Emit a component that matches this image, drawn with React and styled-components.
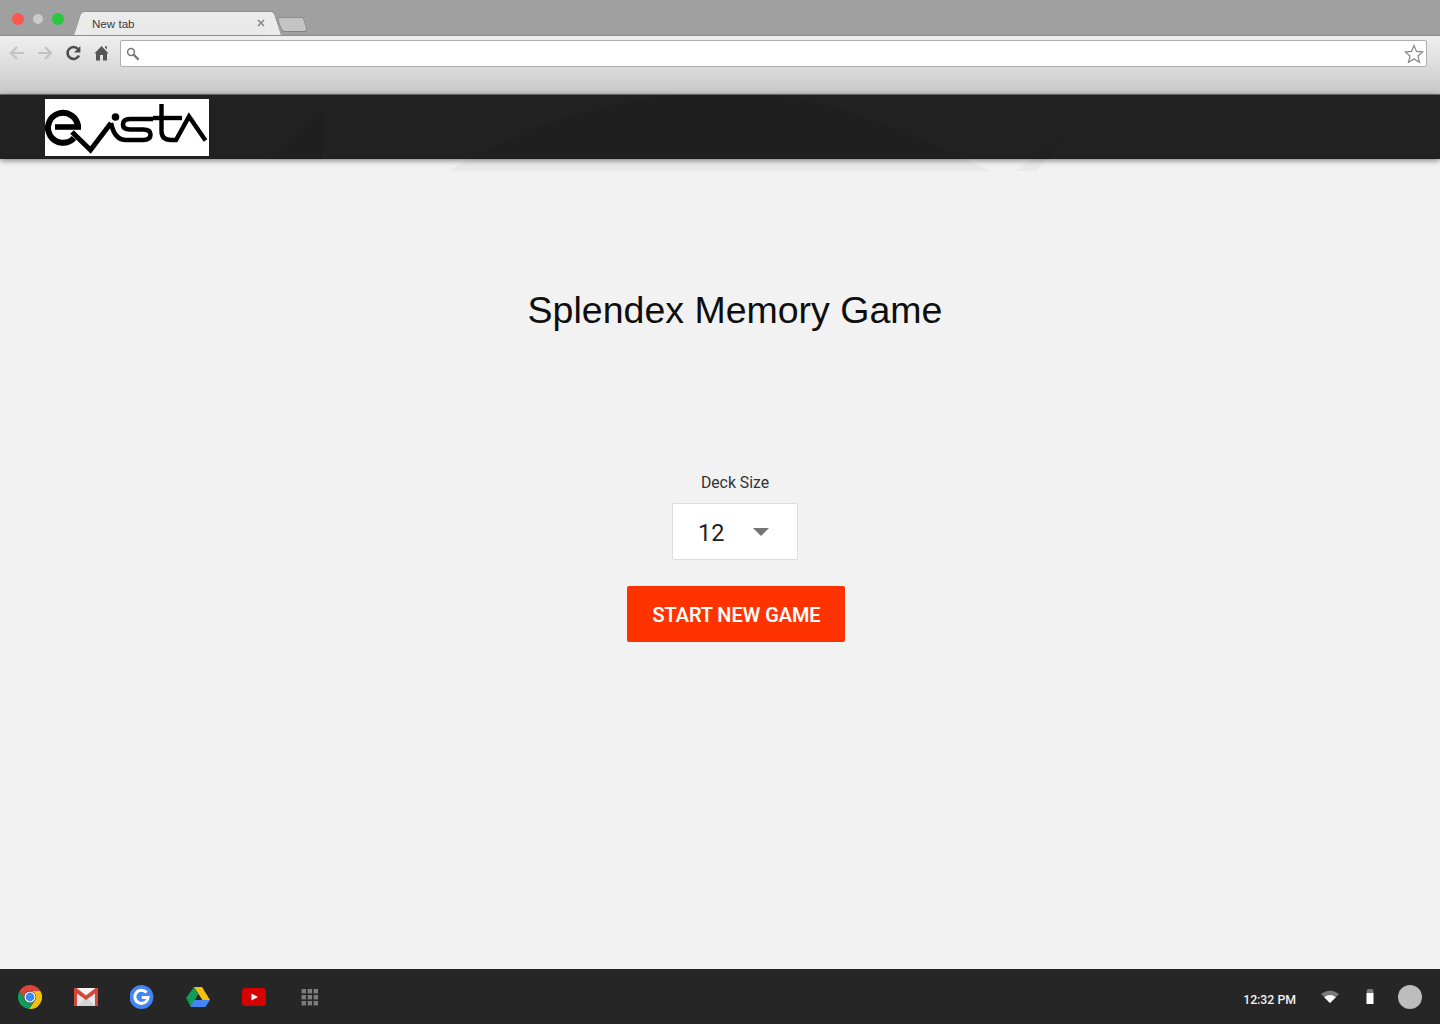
import React from "react";
import styled, { createGlobalStyle } from "styled-components";

const Global = createGlobalStyle`
  html, body { margin: 0; padding: 0; background: #f2f2f2; }
  * { box-sizing: border-box; }
`;

const Page = styled.div`
  position: relative;
  display: flex;
  flex-direction: column;
  width: 1440px;
  height: 1024px;
  overflow: hidden;
  font-family: Roboto, "Liberation Sans", sans-serif;
`;

const TabStrip = styled.div`
  display: flex;
  align-items: flex-end;
  height: 35px;
  background: #a0a0a0;
  padding-left: 10px;
`;

const Lights = styled.div`
  display: flex;
  align-items: center;
  gap: 8px;
  height: 12px;
  margin-bottom: 10px;
  margin-left: 2px;
`;

const Light = styled.span`
  width: ${(p) => p.$size}px;
  height: ${(p) => p.$size}px;
  margin: 0 ${(p) => (12 - p.$size) / 2}px;
  border-radius: 50%;
  background: ${(p) => p.$color};
`;

const Tab = styled.div`
  position: relative;
  display: flex;
  align-items: center;
  justify-content: space-between;
  width: 184px;
  height: 24px;
  margin-left: 22px;
  padding: 0 5px 1px 6px;
  background: linear-gradient(#ececec, #e9e9e9);
  border-top: 1px solid #8f8f8f;
  font: 11.6px "Liberation Sans", Arial, sans-serif;
  color: #3a3a3a;

  &::before, &::after {
    content: "";
    position: absolute;
    top: -1px;
    bottom: 0;
    width: 16px;
    background: #ebebeb;
    border-top: 1px solid #8f8f8f;
  }
  &::before {
    left: -9px;
    transform: skewX(-18deg);
    border-left: 1px solid #8f8f8f;
    border-top-left-radius: 4px;
  }
  &::after {
    right: -8px;
    transform: skewX(18deg);
    border-right: 1px solid #8f8f8f;
    border-top-right-radius: 4px;
  }
`;

const TabLabel = styled.span`
  position: relative;
  z-index: 1;
`;

const TabClose = styled.svg`
  position: relative;
  z-index: 1;
  width: 8px;
  height: 8px;
`;

const NewTab = styled.div`
  width: 27px;
  height: 15px;
  margin-left: 9px;
  margin-bottom: 3px;
  background: #c4c4c4;
  border: 1px solid #808080;
  border-top-color: #8c8c8c;
  border-radius: 3px 2px 4px 4px;
  transform: skewX(18deg);
`;

const Toolbar = styled.div`
  display: flex;
  align-items: flex-start;
  height: 60px;
  padding: 4px 13px 0 8px;
  background: linear-gradient(#efefef 0%, #e4e4e4 30%, #c9c9c9 100%);
  border-top: 1px solid #8d8d8d;
  border-bottom: 1px solid #777;
`;

const NavIcon = styled.svg`
  flex: none;
  width: 18px;
  height: 18px;
  margin: 4px 10px 0 0;
`;

const Omnibox = styled.div`
  flex: 1;
  display: flex;
  align-items: center;
  justify-content: space-between;
  height: 27px;
  padding: 0 2px 0 5px;
  background: #fff;
  border: 1px solid #aeaeae;
  border-radius: 2px;
`;

const Header = styled.header`
  position: relative;
  z-index: 2;
  display: flex;
  align-items: flex-start;
  height: 64px;
  padding: 4px 0 0 45px;
  background: #212121;
  box-shadow: 0 1px 6px rgba(0, 0, 0, 0.55);
`;

const LogoBox = styled.div`
  width: 164px;
  height: 57px;
  background: #fff;
`;

const Watermark = styled.svg`
  position: absolute;
  left: 0;
  top: 95px;
  width: 1440px;
  height: 80px;
  z-index: 3;
  pointer-events: none;
`;

const Main = styled.main`
  flex: 1;
  display: flex;
  flex-direction: column;
  align-items: center;
  padding-left: 30px;
  background: #f2f2f2;
`;

const Title = styled.h1`
  margin: 130px 0 0;
  font: 400 37.5px/42px "Liberation Sans", Arial, sans-serif;
  color: #0e0e0e;
`;

const FieldLabel = styled.label`
  margin-top: 143px;
  font: 400 15.8px/18px Roboto, sans-serif;
  color: #333;
`;

const Select = styled.div`
  display: flex;
  align-items: center;
  justify-content: space-between;
  width: 126px;
  height: 57px;
  margin-top: 11px;
  padding: 2px 28px 0 25px;
  background: #fff;
  border: 1px solid #dcdcdc;
  border-radius: 2px;
  font: 400 23.5px/28px Roboto, sans-serif;
  color: #212121;
`;

const Caret = styled.span`
  width: 0;
  height: 0;
  margin-top: -1px;
  border-left: 8px solid transparent;
  border-right: 8px solid transparent;
  border-top: 8px solid #757575;
`;

const StartButton = styled.button`
  width: 218px;
  height: 56px;
  margin-top: 26px;
  margin-left: 2px;
  padding: 3px 0 0 1px;
  border: 0;
  border-radius: 2px;
  background: #ff3300;
  color: #fff;
  font: 500 19.9px/24px Roboto, sans-serif;
  -webkit-text-stroke: 0.15px #fff;
`;

const Shelf = styled.footer`
  display: flex;
  align-items: center;
  height: 55px;
  padding: 0 18px;
  background: #262626;
`;

const ShelfApps = styled.div`
  display: flex;
  align-items: center;
  gap: 31.9px;
  flex: 1;
`;

const AppIcon = styled.svg`
  display: block;
  width: 24px;
  height: 24px;
`;

const Clock = styled.span`
  margin-top: 7px;
  font: 500 12.3px/16px Roboto, sans-serif;
  color: #f0f0f0;
`;

const Tray = styled.svg`
  display: block;
  width: 18px;
  height: 18px;
  margin-left: ${(p) => p.$gap}px;
`;

const Avatar = styled.span`
  width: 24px;
  height: 24px;
  margin-left: 19px;
  border-radius: 50%;
  background: #bdbdbd;
`;

const Evista = () => (
  <svg width="164" height="57" viewBox="0 0 164 57" fill="none" stroke="#000" strokeLinejoin="round">
    <path d="M29 39 A15 15 0 1 1 33 28" strokeWidth="6" />
    <path d="M10 28 H36" strokeWidth="5.6" />
    <path d="M27 33 L45.5 51 L66 24" strokeWidth="5" strokeLinejoin="miter" />
    <path d="M66 24 Q69.5 41 81 41 H98 Q105.5 41 105.5 35.5 Q105.5 30.5 98 30.5 H85 Q78 30.5 78 25.5 Q78 20 85 20 H108" strokeWidth="4.6" strokeLinejoin="miter" />
    <circle cx="70.5" cy="18" r="3.8" fill="#000" stroke="none" />
    <path d="M116.5 5 V32 Q116.5 41 126 41 H131 L144 17.5 L160.5 41.5" strokeWidth="4.4" strokeLinejoin="miter" />
    <path d="M108 19 H137" strokeWidth="4.4" />
  </svg>
);

const ChromeIcon = () => (
  <AppIcon viewBox="0 0 24 24">
    <path fill="#db4437" d="M1.6 6A12 12 0 0 1 22.4 6H12A6 6 0 0 0 6.8 15Z" />
    <path fill="#f4c20d" d="M22.4 6A12 12 0 0 1 11 24L17.2 15A6 6 0 0 0 12 6Z" />
    <path fill="#0f9d58" d="M1.6 6A12 12 0 0 0 11 24L17.2 15A6 6 0 0 1 6.8 15Z" />
    <circle cx="12" cy="12" r="5.6" fill="#fff" />
    <circle cx="12" cy="12" r="4.4" fill="#4285f4" />
  </AppIcon>
);

const GmailIcon = () => (
  <AppIcon viewBox="0 0 24 24">
    <rect y="3" width="24" height="18" rx="1" fill="#e8e8e8" />
    <path fill="#d3d3d3" d="M3 21 12 12 21 21Z" />
    <path fill="#d44638" d="M0 4 Q0 3 1 3 H3 V21 H1 Q0 21 0 20Z M24 4 Q24 3 23 3 H21 V21 H23 Q24 21 24 20Z" />
    <path fill="#d44638" d="M0 3 H2.4 L12 10.6 21.6 3 H24 V6.2 L12 15 0 6.2Z" />
    <path fill="#f5f5f5" d="M3.6 3 H20.4 L12 9.4Z" />
  </AppIcon>
);

const GoogleIcon = () => (
  <AppIcon viewBox="0.6 0 24 24">
    <circle cx="12" cy="12" r="12" fill="#4285f4" />
    <path d="M17.2 7.6A6.6 6.6 0 1 0 18.6 12.6H12.4" fill="none" stroke="#fff" strokeWidth="3" />
  </AppIcon>
);

const DriveIcon = () => (
  <AppIcon viewBox="0 0 24 24">
    <path fill="#0f9d58" d="M8 2 12.2 9 5 22 0 13Z" />
    <path fill="#f4c20d" d="M8 2H16L24 15H16.4Z" />
    <path fill="#4285f4" d="M8.2 15H24L19.4 22H4.4Z" />
  </AppIcon>
);

const YoutubeIcon = () => (
  <AppIcon viewBox="0 0 24 24">
    <rect y="3" width="24" height="18" rx="3.5" fill="#d50000" />
    <path fill="#f4f4f4" d="M9.5 8.5 16 12 9.5 15.5Z" />
  </AppIcon>
);

const AppsIcon = () => (
  <AppIcon viewBox="0 0 24 24" fill="#7d7d7d">
    {[4, 10, 16].flatMap((y) =>
      [4.6, 10.6, 16.6].map((x) => <rect key={`${x}-${y}`} x={x} y={y} width="4.4" height="4.4" />)
    )}
  </AppIcon>
);

export default function App() {
  return (
    <Page>
      <Global />
      <TabStrip>
        <Lights>
          <Light $size={12} $color="#fc5650" />
          <Light $size={10} $color="#cbcbcb" />
          <Light $size={12} $color="#27c840" />
        </Lights>
        <Tab>
          <TabLabel>New tab</TabLabel>
          <TabClose viewBox="0 0 8 8">
            <path d="M1 1 7 7M7 1 1 7" stroke="#888" strokeWidth="1.6" />
          </TabClose>
        </Tab>
        <NewTab />
      </TabStrip>
      <Toolbar>
        <NavIcon viewBox="0 0 18 18" fill="none" stroke="#c2c2c2" strokeWidth="2.2">
          <path d="M16 9H3M9 3 3 9 9 15" />
        </NavIcon>
        <NavIcon viewBox="0 0 18 18" fill="none" stroke="#c2c2c2" strokeWidth="2.2">
          <path d="M2 9H15M9 3 15 9 9 15" />
        </NavIcon>
        <NavIcon viewBox="0 0 18 18" fill="none">
          <path d="M14.6 11.5A6 6 0 1 1 13.7 5" stroke="#4d4d4d" strokeWidth="2.6" transform="translate(.4 0)" />
          <path d="M16.4 2V8.6H10Z" fill="#4d4d4d" />
        </NavIcon>
        <NavIcon viewBox="0 0 18 18" fill="#555">
          <path d="M9.5 2 16.5 9.5H15V16.5H11V11H8V16.5H4V9.5H2.5Z" />
          <path d="M13 2.2H14.8V5.4L13 3.8Z" />
        </NavIcon>
        <Omnibox>
          <svg width="14" height="14" viewBox="0 0 14 14" fill="none" stroke="#777">
            <circle cx="5" cy="5" r="3.4" strokeWidth="1.5" />
            <path d="M7.6 7.6 12.6 12.6" strokeWidth="2.2" />
          </svg>
          <svg width="20" height="20" viewBox="0 0 20 20" fill="none" stroke="#7f7f7f" strokeWidth="1.1">
            <path d="M10 1.5 12.5 7.4 18.8 7.9 14 12 15.5 18.3 10 15 4.5 18.3 6 12 1.2 7.9 7.5 7.4Z" />
          </svg>
        </Omnibox>
      </Toolbar>
      <Header>
        <LogoBox>
          <Evista />
        </LogoBox>
      </Header>
      <Watermark viewBox="0 0 1440 80">
        <path
          fill="rgba(0,0,0,0.035)"
          d="M449 76 Q540 20 668 0 H780 Q880 20 990 76Z M1015 76 H1037 L1065 40Z M270 65 L322 15 V65Z"
        />
      </Watermark>
      <Main>
        <Title>Splendex Memory Game</Title>
        <FieldLabel>Deck Size</FieldLabel>
        <Select>
          12
          <Caret />
        </Select>
        <StartButton>START NEW GAME</StartButton>
      </Main>
      <Shelf>
        <ShelfApps>
          <ChromeIcon />
          <GmailIcon />
          <GoogleIcon />
          <DriveIcon />
          <YoutubeIcon />
          <AppsIcon />
        </ShelfApps>
        <Clock>12:32 PM</Clock>
        <Tray $gap={25} viewBox="0 0 18 18">
          <path fill="#7a7a7a" d="M0 6 Q9 -1 18 6 L9 15Z" />
          <path fill="#fff" d="M3.2 9.2 Q9 4.8 14.8 9.2 L9 15Z" />
        </Tray>
        <Tray $gap={22} viewBox="0 0 18 18">
          <rect x="6" y="1" width="6" height="3" rx="1" fill="#777" />
          <rect x="5.5" y="3" width="7" height="2" fill="#777" />
          <rect x="5.5" y="5" width="7" height="11" fill="#fff" />
        </Tray>
        <Avatar />
      </Shelf>
    </Page>
  );
}
